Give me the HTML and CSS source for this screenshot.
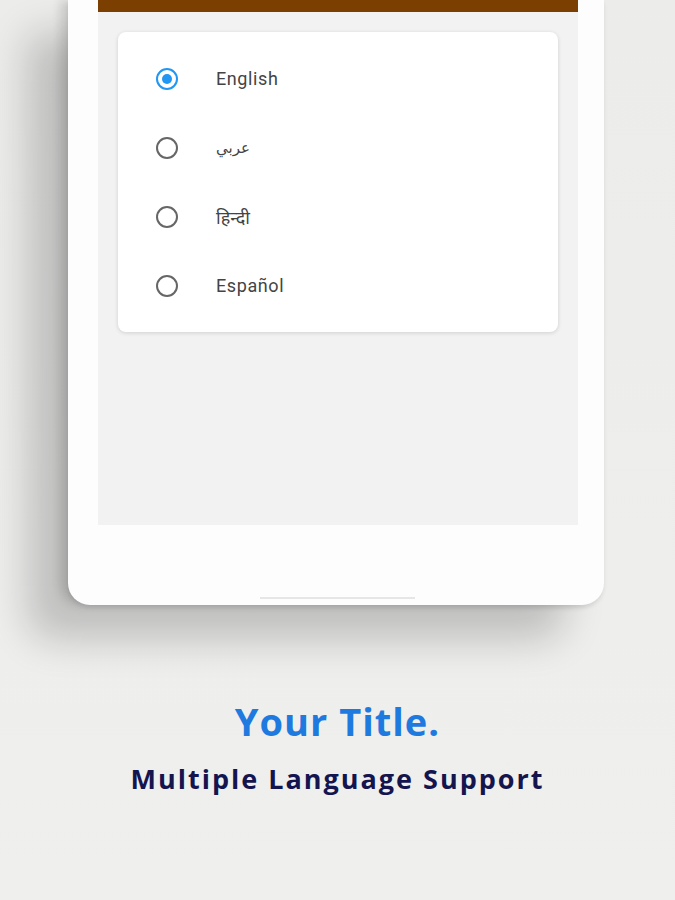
FILE: index.html
```html
<!DOCTYPE html>
<html lang="en">
<head>
    <title>Multiple Language Support</title>
    <link rel="stylesheet" href="styles.css">
</head>
<body>
<div class="stage">
    <div class="phone">
        <div class="screen">
            <div class="topbar"></div>
            <div class="content">
                <div class="card">
                    <label class="option">
                        <span class="radio checked"></span>
                        <span class="label">English</span>
                    </label>
                    <label class="option">
                        <span class="radio"></span>
                        <span class="label arabic">عربي</span>
                    </label>
                    <label class="option">
                        <span class="radio"></span>
                        <span class="label hindi">हिन्दी</span>
                    </label>
                    <label class="option">
                        <span class="radio"></span>
                        <span class="label">Español</span>
                    </label>
                </div>
            </div>
        </div>
        <div class="home-bar"></div>
    </div>
</div>
<div class="caption">
    <h1>Your Title.</h1>
    <h2>Multiple Language Support</h2>
</div>
</body>
</html>
```
FILE: styles.css
```css
body {
    margin: 0;
    height: 900px;
    overflow: hidden;
    font-family: Roboto, "Noto Sans", sans-serif;
    background: linear-gradient(180deg, #ececeb 0%, #efefee 100%);
}

.stage {
    padding-left: 68px;
    width: 536px;
}

.phone {
    background-color: #fdfdfd;
    border-radius: 0 0 22px 22px;
    padding: 0 26px 80px 30px;
    position: relative;
    box-shadow: -40px 34px 40px rgba(0, 0, 0, 0.2), -8px 0 10px rgba(0, 0, 0, 0.12), 0 3px 4px rgba(0, 0, 0, 0.08);
}

.screen {
    background-color: #f2f2f2;
    height: 525px;
}

.topbar {
    height: 12px;
    background-color: #7b3f02;
}

.content {
    padding: 20px;
}

.card {
    background-color: #fff;
    border-radius: 8px;
    padding: 12px 0 12px 38px;
    box-shadow: 0 1px 4px rgba(0, 0, 0, 0.14);
}

.option {
    display: flex;
    align-items: center;
    height: 69px;
    gap: 38px;
}

.radio {
    width: 18px;
    height: 18px;
    border: 2px solid #666;
    border-radius: 50%;
    box-sizing: content-box;
    display: flex;
    align-items: center;
    justify-content: center;
}

.radio.checked {
    border-color: #2196f3;
}

.radio.checked::after {
    content: "";
    width: 10px;
    height: 10px;
    border-radius: 50%;
    background-color: #2196f3;
}

.label {
    font-size: 18px;
    color: #444;
    letter-spacing: 0.6px;
}

.arabic {
    font-family: "DejaVu Sans", "Noto Sans", sans-serif;
    font-size: 15px;
}

.hindi {
    font-family: "Noto Sans", "DejaVu Sans", sans-serif;
    letter-spacing: 0;
}

.home-bar {
    position: absolute;
    left: 192px;
    bottom: 6px;
    width: 155px;
    height: 2px;
    background-color: #e6e6e6;
}

.caption {
    text-align: center;
    padding-top: 92px;
}

h1 {
    margin: 0;
    font-family: "Open Sans", sans-serif;
    font-weight: 700;
    font-size: 38px;
    line-height: 48px;
    letter-spacing: 1px;
    color: #1f7ae0;
}

h2 {
    margin: 14px 0 0;
    font-family: "Open Sans", sans-serif;
    font-weight: 700;
    font-size: 27px;
    line-height: 40px;
    letter-spacing: 2px;
    color: #14154f;
}
```
